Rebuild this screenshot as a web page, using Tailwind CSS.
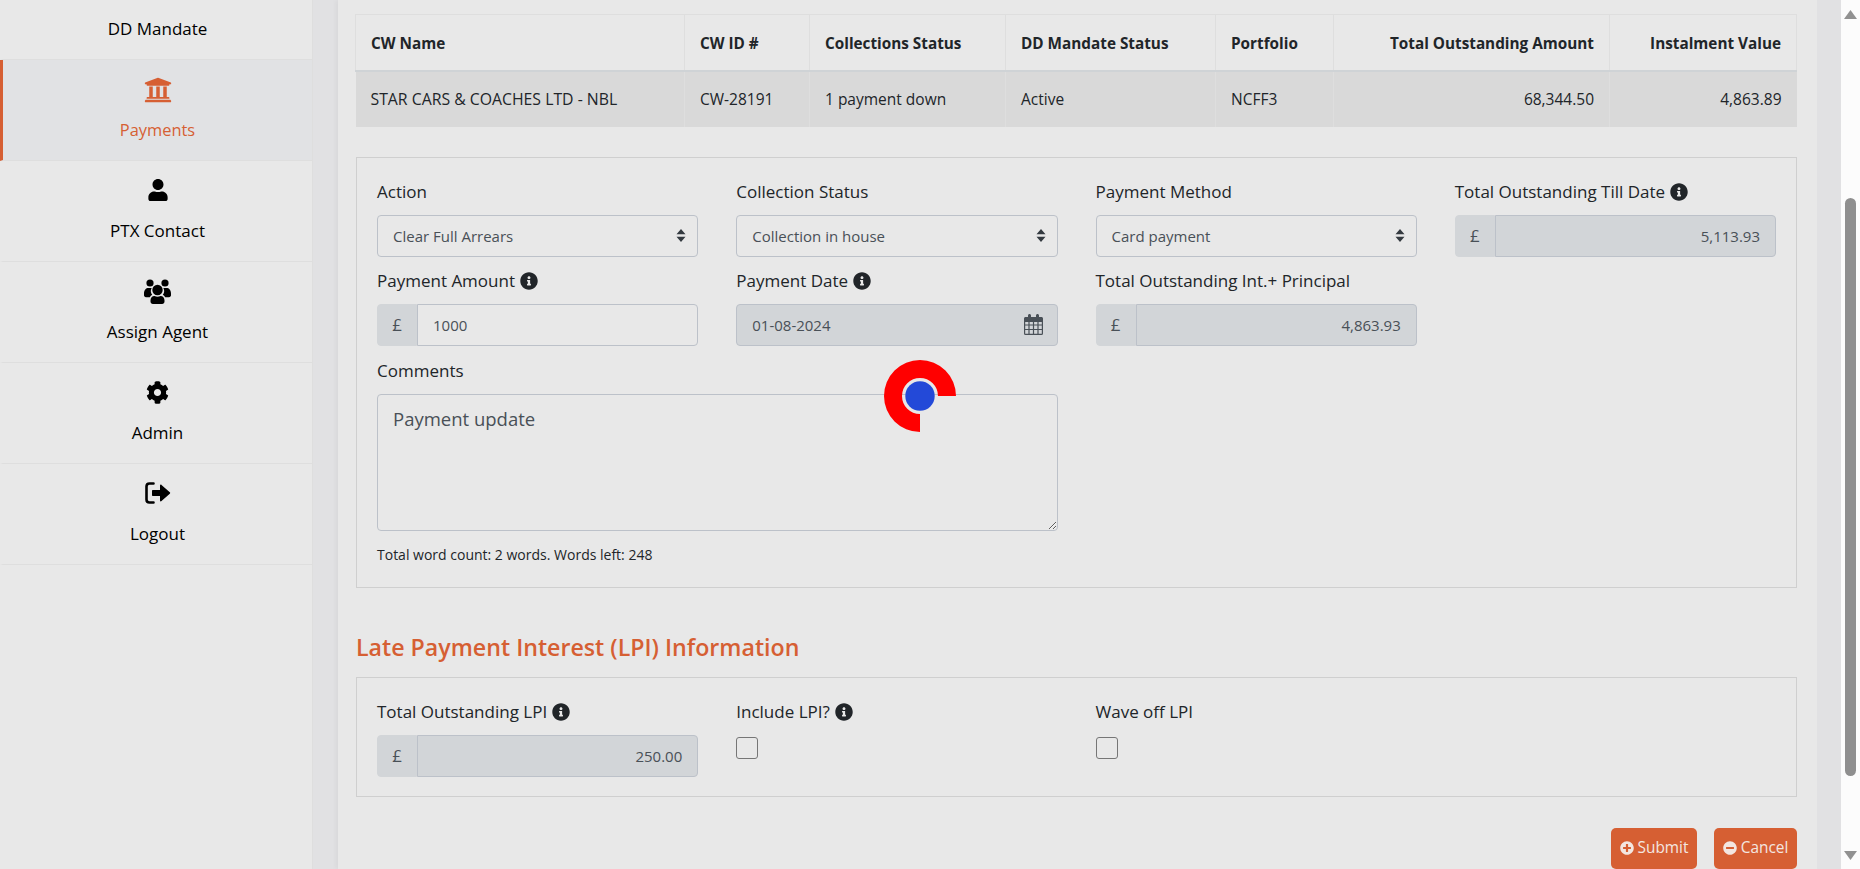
<!DOCTYPE html>
<html lang="en">
<head>
    <meta charset="UTF-8">
    <meta name="viewport" content="width=device-width, initial-scale=1.0">
    <title>Payments</title>
    <script src="https://cdn.jsdelivr.net/npm/@tailwindcss/browser@4"></script>
</head>
<body class="font-['Open_Sans',sans-serif] bg-[#e1e1e3] text-[#212529] text-[17px] overflow-hidden">
    <svg class="hidden">
        <symbol id="info" viewBox="0 0 512 512"><path fill="currentColor" d="M256 8C119.043 8 8 119.083 8 256c0 136.997 111.043 248 248 248s248-111.003 248-248C504 119.083 392.957 8 256 8zm0 110c23.196 0 42 18.804 42 42s-18.804 42-42 42-42-18.804-42-42 18.804-42 42-42zm56 254c0 6.627-5.373 12-12 12h-88c-6.627 0-12-5.373-12-12v-24c0-6.627 5.373-12 12-12h12v-64h-12c-6.627 0-12-5.373-12-12v-24c0-6.627 5.373-12 12-12h64c6.627 0 12 5.373 12 12v100h12c6.627 0 12 5.373 12 12v24z"/></symbol>
        <symbol id="updown" viewBox="0 0 10 13"><path fill="#343a40" d="M5 0l4.500 5.200h-9zM5 13L.5 7.800h9z"/></symbol>
    </svg>

    <div class="relative flex h-[869px] w-[1860px] overflow-hidden">
        <!-- Sidebar -->
        <aside class="w-[313px] shrink-0 bg-[#e8e8e8] border-r border-[#dedede] text-black">
            <a class="flex h-[60px] items-center justify-center border-b border-b-[#dedede] border-l-3 border-l-transparent pb-[2px]">DD Mandate</a>
            <a class="flex h-[101px] flex-col items-center pt-[17px] border-b border-b-[#dedede] border-l-3 border-l-[#d65f33] bg-[#e1e2e4] text-[#d65f33]">
                <span class="flex h-[26px] items-center">
                    <svg class="w-[28px] h-[28px]" viewBox="0 0 512 512"><path fill="currentColor" d="M496 128v16a8 8 0 0 1-8 8h-24v12c0 6.627-5.373 12-12 12H60c-6.627 0-12-5.373-12-12v-12H24a8 8 0 0 1-8-8v-16a8 8 0 0 1 4.941-7.392l232-88a7.996 7.996 0 0 1 6.118 0l232 88A8 8 0 0 1 496 128zm-24 304H40c-13.255 0-24 10.745-24 24v16a8 8 0 0 0 8 8h464a8 8 0 0 0 8-8v-16c0-13.255-10.745-24-24-24zM96 192v192H60c-6.627 0-12 5.373-12 12v20h416v-20c0-6.627-5.373-12-12-12h-36V192h-64v192h-64V192h-64v192h-64V192H96z"/></svg>
                </span>
                <span class="mt-[15px] text-[16.4px] leading-[24px]">Payments</span>
            </a>
            <a class="flex h-[101px] flex-col items-center pt-[16px] border-b border-b-[#dedede] border-l-3 border-l-transparent">
                <span class="flex h-[26px] items-center">
                    <svg class="w-[20px] h-[22px]" viewBox="0 0 448 512"><path fill="currentColor" d="M224 256c70.700 0 128-57.300 128-128S294.700 0 224 0 96 57.300 96 128s57.300 128 128 128zm89.600 32h-16.700c-22.200 10.200-46.900 16-72.900 16s-50.600-5.800-72.900-16h-16.700C60.200 288 0 348.200 0 422.400V464c0 26.500 21.500 48 48 48h352c26.500 0 48-21.500 48-48v-41.600c0-74.200-60.200-134.400-134.400-134.400z"/></svg>
                </span>
                <span class="mt-[16px] leading-[24px]">PTX Contact</span>
            </a>
            <a class="flex h-[101px] flex-col items-center pt-[16px] border-b border-b-[#dedede] border-l-3 border-l-transparent">
                <span class="flex h-[26px] items-center">
                    <svg class="w-[27px] h-[25px]" viewBox="0 0 27 25" fill="currentColor">
                        <circle cx="6" cy="4" r="3.600"/><circle cx="21" cy="4" r="3.600"/>
                        <path d="M0 14.500C0 11 2 9 4.500 9h3.200c-.7 1.200-1 2.500-.8 4 .2 1 .6 2 1.300 2.800-1 .6-1.800 1.400-2.400 2.400H2c-1.200 0-2-.8-2-1.900zM27 14.500C27 11 25 9 22.500 9h-3.200c.7 1.200 1 2.500.8 4-.2 1-.6 2-1.300 2.800 1 .6 1.800 1.400 2.400 2.400H25c1.200 0 2-.8 2-1.900z"/>
                        <circle cx="13.500" cy="11" r="5.200"/>
                        <path d="M6.500 21.500C6.500 19 8 17 10.500 17c1 .5 2 .8 3 .8s2-.3 3-.8c2.500 0 4 2 4 4.500v1c0 1.300-1 2.500-2.400 2.500H8.900c-1.400 0-2.400-1.200-2.400-2.500z"/>
                    </svg>
                </span>
                <span class="mt-[16px] leading-[24px]">Assign Agent</span>
            </a>
            <a class="flex h-[101px] flex-col items-center pt-[16px] border-b border-b-[#dedede] border-l-3 border-l-transparent">
                <span class="flex h-[26px] items-center">
                    <svg class="w-[23px] h-[23px]" viewBox="0 0 512 512"><path fill="currentColor" d="M487.4 315.7l-42.6-24.6c4.3-23.2 4.3-47 0-70.2l42.6-24.6c4.9-2.8 7.1-8.6 5.5-14-11.1-35.6-30-67.8-54.7-94.6-3.8-4.1-10-5.1-14.8-2.3L380.8 110c-17.9-15.4-38.5-27.3-60.8-35.1V25.8c0-5.6-3.9-10.5-9.4-11.7-36.7-8.2-74.3-7.8-109.2 0-5.5 1.2-9.4 6.1-9.4 11.7V75c-22.2 7.9-42.8 19.8-60.8 35.1L88.7 85.5c-4.9-2.8-11-1.9-14.8 2.3-24.7 26.7-43.6 58.9-54.7 94.6-1.7 5.4.6 11.2 5.5 14L67.3 221c-4.3 23.2-4.3 47 0 70.2l-42.6 24.6c-4.9 2.8-7.1 8.6-5.5 14 11.1 35.6 30 67.8 54.7 94.6 3.8 4.1 10 5.1 14.8 2.3l42.6-24.6c17.9 15.4 38.5 27.3 60.8 35.1v49.2c0 5.6 3.9 10.5 9.4 11.7 36.7 8.2 74.3 7.8 109.2 0 5.5-1.2 9.4-6.1 9.4-11.7v-49.2c22.2-7.9 42.8-19.8 60.8-35.1l42.6 24.6c4.9 2.8 11 1.9 14.8-2.3 24.7-26.7 43.6-58.9 54.7-94.6 1.5-5.5-.7-11.3-5.6-14.1zM256 336c-44.1 0-80-35.9-80-80s35.9-80 80-80 80 35.9 80 80-35.9 80-80 80z"/></svg>
                </span>
                <span class="mt-[16px] leading-[24px]">Admin</span>
            </a>
            <a class="flex h-[101px] flex-col items-center pt-[16px] border-b border-b-[#dedede] border-l-3 border-l-transparent">
                <span class="flex h-[26px] items-center">
                    <svg class="w-[26px] h-[22px]" viewBox="0 0 26 22" fill="none">
                        <path d="M8.500 1.500H4.500C2.800 1.500 1.500 2.800 1.500 4.500v13c0 1.700 1.300 3 3 3h4" stroke="currentColor" stroke-width="2.600" stroke-linecap="round"/>
                        <path fill="currentColor" d="M8 8h7V3.500c0-.8.9-1.200 1.500-.6l8.300 7.400c.5.400.5 1 0 1.400l-8.300 7.400c-.6.600-1.500.2-1.500-.6V14H8c-.6 0-1-.4-1-1V9c0-.6.4-1 1-1z"/>
                    </svg>
                </span>
                <span class="mt-[16px] leading-[24px]">Logout</span>
            </a>
        </aside>

        <div class="w-[25px] shrink-0"></div>

        <!-- Main panel -->
        <main class="w-[1479px] shrink-0 bg-[#e8e8e8] pt-[14px] pl-[18px] pr-[20px] shadow-[-3px_0_4px_rgba(0,0,0,0.03)]">
            <table class="-ml-[1px] w-[1441px] table-fixed border-collapse text-[15.5px]">
                <colgroup>
                    <col class="w-[329px]"><col class="w-[125px]"><col class="w-[196px]"><col class="w-[210px]"><col class="w-[118px]"><col class="w-[276px]"><col class="w-[187px]">
                </colgroup>
                <thead>
                    <tr class="h-[56px] text-[15.3px] font-bold">
                        <th class="border border-[#dedede] border-b-2 border-b-[#cfd3d6] px-[15px] pt-[2px] text-left">CW Name</th>
                        <th class="border border-[#dedede] border-b-2 border-b-[#cfd3d6] px-[15px] pt-[2px] text-left">CW ID #</th>
                        <th class="border border-[#dedede] border-b-2 border-b-[#cfd3d6] px-[15px] pt-[2px] text-left">Collections Status</th>
                        <th class="border border-[#dedede] border-b-2 border-b-[#cfd3d6] px-[15px] pt-[2px] text-left">DD Mandate Status</th>
                        <th class="border border-[#dedede] border-b-2 border-b-[#cfd3d6] px-[15px] pt-[2px] text-left">Portfolio</th>
                        <th class="border border-[#dedede] border-b-2 border-b-[#cfd3d6] px-[15px] pt-[2px] text-right">Total Outstanding Amount</th>
                        <th class="border border-[#dedede] border-b-2 border-b-[#cfd3d6] px-[15px] pt-[2px] text-right">Instalment Value</th>
                    </tr>
                </thead>
                <tbody>
                    <tr class="h-[56px] bg-[#d9d9d9]">
                        <td class="border-r border-[#dedede] px-[15px] pt-[2px] text-[15.8px]">STAR CARS &amp; COACHES LTD - NBL</td>
                        <td class="border-r border-[#dedede] px-[15px] pt-[2px]">CW-28191</td>
                        <td class="border-r border-[#dedede] px-[15px] pt-[2px]">1 payment down</td>
                        <td class="border-r border-[#dedede] px-[15px] pt-[2px]">Active</td>
                        <td class="border-r border-[#dedede] px-[15px] pt-[2px]">NCFF3</td>
                        <td class="border-r border-[#dedede] px-[15px] pt-[2px] text-right">68,344.50</td>
                        <td class="px-[15px] pt-[2px] text-right">4,863.89</td>
                    </tr>
                </tbody>
            </table>

            <form class="mt-[30px] w-[1441px] border border-[#cfcfcf] px-[20px] pt-[22px] pb-[23px]">
                <div class="grid grid-cols-4 gap-x-[38px] gap-y-[12px]">
                    <div>
                        <label class="mb-[11px] flex h-[24px] items-center">Action</label>
                        <div class="flex h-[42px] items-center justify-between rounded-[4px] border border-[#bcc1c9] pl-[15px] pr-[11px] text-[15px] text-[#495057]">
                            <span class="pt-[1px]">Clear Full Arrears</span>
                            <svg class="h-[13px] w-[10px]"><use href="#updown"/></svg>
                        </div>
                    </div>
                    <div>
                        <label class="mb-[11px] flex h-[24px] items-center">Collection Status</label>
                        <div class="flex h-[42px] items-center justify-between rounded-[4px] border border-[#bcc1c9] pl-[15px] pr-[11px] text-[15px] text-[#495057]">
                            <span class="pt-[1px]">Collection in house</span>
                            <svg class="h-[13px] w-[10px]"><use href="#updown"/></svg>
                        </div>
                    </div>
                    <div>
                        <label class="mb-[11px] flex h-[24px] items-center">Payment Method</label>
                        <div class="flex h-[42px] items-center justify-between rounded-[4px] border border-[#bcc1c9] pl-[15px] pr-[11px] text-[15px] text-[#495057]">
                            <span class="pt-[1px]">Card payment</span>
                            <svg class="h-[13px] w-[10px]"><use href="#updown"/></svg>
                        </div>
                    </div>
                    <div>
                        <label class="mb-[11px] flex h-[24px] items-center gap-[5px]">Total Outstanding Till Date <svg class="h-[18px] w-[18px]"><use href="#info"/></svg></label>
                        <div class="flex h-[42px] text-[15px] text-[#495057]">
                            <span class="flex w-[40px] items-center justify-center rounded-l-[4px] border border-[#d2d5d8] bg-[#d2d5d8] text-[17px]">£</span>
                            <span class="flex flex-1 items-center justify-end rounded-r-[4px] border border-[#bcc1c9] bg-[#d2d5d8] px-[15px] pt-[1px]">5,113.93</span>
                        </div>
                    </div>

                    <div>
                        <label class="mb-[11px] flex h-[24px] items-center gap-[5px]">Payment Amount <svg class="h-[18px] w-[18px]"><use href="#info"/></svg></label>
                        <div class="flex h-[42px] text-[15px] text-[#495057]">
                            <span class="flex w-[40px] items-center justify-center rounded-l-[4px] border border-[#d2d5d8] bg-[#d2d5d8] text-[17px]">£</span>
                            <span class="flex flex-1 items-center rounded-r-[4px] border border-[#bcc1c9] px-[15px] pt-[2px]">1000</span>
                        </div>
                    </div>
                    <div>
                        <label class="mb-[11px] flex h-[24px] items-center gap-[5px]">Payment Date <svg class="h-[18px] w-[18px]"><use href="#info"/></svg></label>
                        <div class="flex h-[42px] items-center justify-between rounded-[4px] border border-[#bcc1c9] bg-[#d2d5d8] pl-[15px] pr-[14px] text-[15px] text-[#495057]">
                            <span class="pt-[2px]">01-08-2024</span>
                            <svg class="h-[21px] w-[19px]" viewBox="0 0 19 21" fill="none">
                                <path fill="#495057" d="M1.500 3H4V1.500C4 .7 4.700 0 5.500 0S7 .7 7 1.500V3h5V1.500C12 .7 12.700 0 13.500 0S15 .7 15 1.500V3h2.500C18.300 3 19 3.700 19 4.500V8H0V4.500C0 3.700.7 3 1.500 3z"/>
                                <path stroke="#495057" stroke-width="1.200" d="M.6 7v12.500c0 .5.4.9.9.9h16c.5 0 .9-.4.9-.9V7M.6 11h17.800M.6 15.500h17.800M5 8v12M9.500 8v12M14 8v12"/>
                            </svg>
                        </div>
                    </div>
                    <div class="col-start-3">
                        <label class="mb-[11px] flex h-[24px] items-center">Total Outstanding Int.+ Principal</label>
                        <div class="flex h-[42px] text-[15px] text-[#495057]">
                            <span class="flex w-[40px] items-center justify-center rounded-l-[4px] border border-[#d2d5d8] bg-[#d2d5d8] text-[17px]">£</span>
                            <span class="flex flex-1 items-center justify-end rounded-r-[4px] border border-[#bcc1c9] bg-[#d2d5d8] px-[15px] pt-[2px]">4,863.93</span>
                        </div>
                    </div>

                    <div class="col-span-2 col-start-1 mt-[1px]">
                        <label class="mb-[11px] flex h-[24px] items-center">Comments</label>
                        <textarea class="block h-[137px] w-full rounded-[4px] border border-[#bcc1c9] px-[15px] pt-[10px] text-[18.5px] text-[#495057]">Payment update</textarea>
                        <p class="mt-[15px] text-[14px] leading-[18px]">Total word count: 2 words. Words left: 248</p>
                    </div>
                </div>
            </form>

            <h2 class="mt-[41px] mb-[12px] h-[36px] text-[23.2px] font-semibold leading-[36px] text-[#d65f33]">Late Payment Interest (LPI) Information</h2>

            <div class="w-[1441px] border border-[#cfcfcf] px-[20px] pt-[22px] pb-[19px]">
                <div class="grid grid-cols-4 gap-x-[38px]">
                    <div>
                        <label class="mb-[11px] flex h-[24px] items-center gap-[5px]">Total Outstanding LPI <svg class="h-[18px] w-[18px]"><use href="#info"/></svg></label>
                        <div class="flex h-[42px] text-[15px] text-[#495057]">
                            <span class="flex w-[40px] items-center justify-center rounded-l-[4px] border border-[#d2d5d8] bg-[#d2d5d8] text-[17px]">£</span>
                            <span class="flex flex-1 items-center justify-end rounded-r-[4px] border border-[#bcc1c9] bg-[#d2d5d8] px-[15px] pt-[1px]">250.00</span>
                        </div>
                    </div>
                    <div>
                        <label class="mb-[13px] flex h-[24px] items-center gap-[5px]">Include LPI? <svg class="h-[18px] w-[18px]"><use href="#info"/></svg></label>
                        <input type="checkbox" class="block h-[22px] w-[22px] appearance-none rounded-[3px] border border-[#767676]">
                    </div>
                    <div>
                        <label class="mb-[13px] flex h-[24px] items-center">Wave off LPI</label>
                        <input type="checkbox" class="block h-[22px] w-[22px] appearance-none rounded-[3px] border border-[#767676]">
                    </div>
                </div>
            </div>

            <div class="mt-[31px] flex w-[1441px] justify-end gap-[17px]">
                <button class="flex h-[41px] w-[86px] items-center justify-center gap-[4px] rounded-[5px] bg-[#d65f33] text-[15.4px] text-[#f3e6e0]">
                    <svg class="h-[14px] w-[14px]" viewBox="0 0 512 512"><path fill="currentColor" d="M256 8C119 8 8 119 8 256s111 248 248 248 248-111 248-248S393 8 256 8zm144 276c0 6.600-5.400 12-12 12h-92v92c0 6.600-5.400 12-12 12h-56c-6.600 0-12-5.400-12-12v-92h-92c-6.600 0-12-5.400-12-12v-56c0-6.600 5.400-12 12-12h92v-92c0-6.600 5.400-12 12-12h56c6.600 0 12 5.400 12 12v92h92c6.600 0 12 5.400 12 12v56z"/></svg>
                    Submit
                </button>
                <button class="flex h-[41px] w-[83px] items-center justify-center gap-[4px] rounded-[5px] bg-[#d65f33] text-[15.4px] text-[#f3e6e0]">
                    <svg class="h-[14px] w-[14px]" viewBox="0 0 512 512"><path fill="currentColor" d="M256 8C119 8 8 119 8 256s111 248 248 248 248-111 248-248S393 8 256 8zM124 296c-6.600 0-12-5.400-12-12v-56c0-6.600 5.400-12 12-12h264c6.600 0 12 5.400 12 12v56c0 6.600-5.400 12-12 12H124z"/></svg>
                    Cancel
                </button>
            </div>
        </main>

        <div class="w-[24px] shrink-0"></div>

        <!-- Scrollbar -->
        <div class="flex w-[19px] shrink-0 flex-col items-center bg-[#fcfcfc] pt-[10px]">
            <svg class="h-[9px] w-[13px]" viewBox="0 0 13 9"><path fill="#919191" d="M6.500 0L13 9H0z"/></svg>
            <div class="mt-[179px] h-[578px] w-[11px] rounded-full bg-[#8f8f8f]"></div>
            <svg class="mt-[75px] h-[9px] w-[13px]" viewBox="0 0 13 9"><path fill="#919191" d="M6.500 9L13 0H0z"/></svg>
        </div>

        <!-- Loading spinner over the form -->
        <svg class="absolute left-[884px] top-[360px] h-[72px] w-[72px]" viewBox="0 0 72 72">
            <path fill="#ff0000" d="M72 36A36 36 0 1 0 36 72L36 54A18 18 0 1 1 54 36Z"/>
            <circle cx="36" cy="36" r="14.700" fill="#2349d8"/>
        </svg>
    </div>
</body>
</html>
